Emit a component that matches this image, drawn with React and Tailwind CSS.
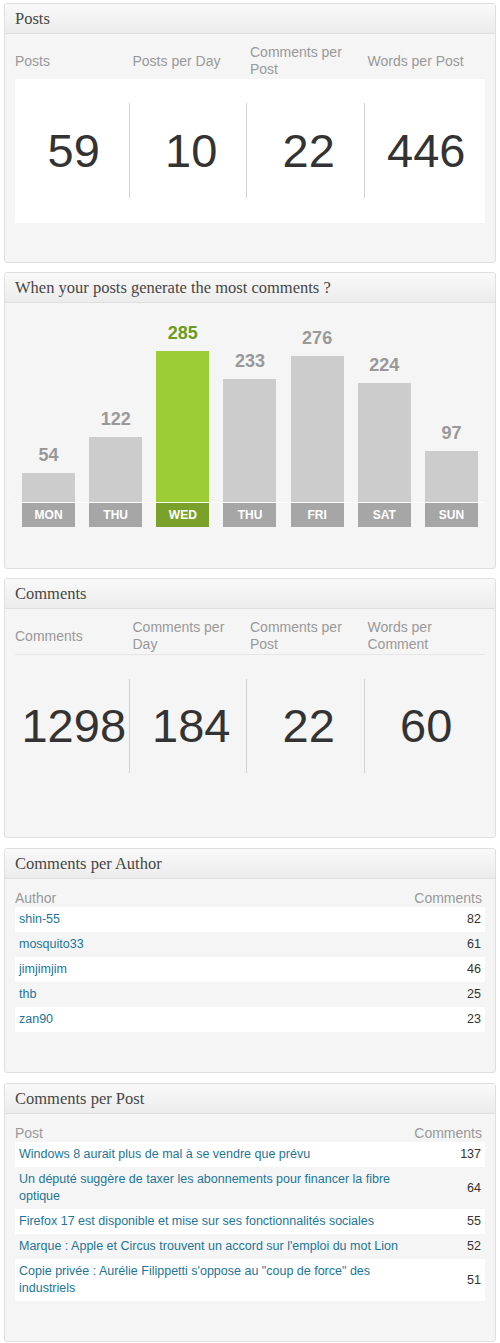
import React from "react";

const sans = { fontFamily: '"Liberation Sans", Arial, sans-serif' };

function Panel({ title, children, className = "" }) {
  return (
    <div className={"rounded-[3px] border border-[#dfdfdf] bg-[#f5f5f5] overflow-hidden " + className}>
      <div className="h-[30px] border-b border-[#dfdfdf] bg-gradient-to-b from-[#f9f9f9] to-[#ececec] px-[10px] flex items-center">
        <span
          className="text-[16.5px] text-[#464646] leading-none pt-[1px]"
          style={{ fontFamily: '"Liberation Serif", Georgia, serif' }}
        >
          {title}
        </span>
      </div>
      <div className="px-[10px]">{children}</div>
    </div>
  );
}

function Stats({ labels, values, white }) {
  return (
    <div className="pt-[9px] pb-[39px]">
      <div className="grid grid-cols-4 h-[36px]">
        {labels.map((l, i) => (
          <div key={i} className="flex items-center pr-[6px] text-[14px] leading-[17px] text-[#999]">
            {l}
          </div>
        ))}
      </div>
      <div
        className={
          "grid grid-cols-4 h-[144px] " +
          (white ? "bg-white" : "border-t border-[#e6e6e6]")
        }
      >
        {values.map((v, i) => (
          <div key={i} className="relative flex items-center justify-center text-[47px] text-[#333] leading-none">
            {i > 0 && (
              <div className="absolute left-[-4px] top-[24px] bottom-[25px] w-px bg-[#d2d2d2]" />
            )}
            <span className="-mt-[2px]">{v}</span>
          </div>
        ))}
      </div>
    </div>
  );
}

const days = [
  { d: "MON", v: 54 },
  { d: "THU", v: 122 },
  { d: "WED", v: 285, hi: true },
  { d: "THU", v: 233 },
  { d: "FRI", v: 276 },
  { d: "SAT", v: 224 },
  { d: "SUN", v: 97 },
];

function Chart() {
  return (
    <div className="pb-[41px]">
      <div className="h-[199px] grid grid-cols-7 items-end">
        {days.map((x, i) => (
          <div key={i} className="flex flex-col items-center">
            <div
              className={
                "text-[18px] font-bold leading-[22px] mb-[7px] " +
                (x.hi ? "text-[#6b9c1e]" : "text-[#999]")
              }
            >
              {x.v}
            </div>
            <div
              className={"w-[53px] " + (x.hi ? "bg-[#9dcd35]" : "bg-[#cccccc]")}
              style={{ height: Math.round(x.v * 0.53) + "px" }}
            />
          </div>
        ))}
      </div>
      <div className="h-px bg-white" />
      <div className="grid grid-cols-7">
        {days.map((x, i) => (
          <div key={i} className="flex justify-center">
            <div
              className={
                "w-[53px] h-[24px] flex items-center justify-center text-white text-[12px] font-bold " +
                (x.hi ? "bg-[#7aa22a]" : "bg-[#a6a6a6]")
              }
            >
              {x.d}
            </div>
          </div>
        ))}
      </div>
    </div>
  );
}

function Table({ head, rows, titleWidth }) {
  return (
    <div className="pb-[40px]">
      <div className="h-[28px] pt-[10px] flex justify-between text-[14px] leading-[18px] text-[#999] pr-[3px]">
        <span>{head}</span>
        <span>Comments</span>
      </div>
      {rows.map((r, i) => (
        <div
          key={i}
          className={
            "flex items-center justify-between px-[4px] py-[4px] text-[12.5px] leading-[17px] " +
            (i % 2 === 0 ? "bg-white" : "")
          }
        >
          <span className="text-[#21759b]" style={titleWidth ? { width: titleWidth } : undefined}>
            {r[0]}
          </span>
          <span className="text-[#333]">{r[1]}</span>
        </div>
      ))}
    </div>
  );
}

export default function App() {
  return (
    <div className="bg-white px-[4px] pt-[3px] pb-[1px]" style={sans}>
      <Panel title="Posts">
        <Stats
          white
          labels={["Posts", "Posts per Day", "Comments per Post", "Words per Post"]}
          values={["59", "10", "22", "446"]}
        />
      </Panel>
      <Panel title="When your posts generate the most comments ?" className="mt-[9px]">
        <Chart />
      </Panel>
      <Panel title="Comments" className="mt-[9px]">
        <Stats
          labels={["Comments", "Comments per Day", "Comments per Post", "Words per Comment"]}
          values={["1298", "184", "22", "60"]}
        />
      </Panel>
      <Panel title="Comments per Author" className="mt-[10px]">
        <Table
          head="Author"
          rows={[
            ["shin-55", "82"],
            ["mosquito33", "61"],
            ["jimjimjim", "46"],
            ["thb", "25"],
            ["zan90", "23"],
          ]}
        />
      </Panel>
      <Panel title="Comments per Post" className="mt-[10px]">
        <Table
          head="Post"
          titleWidth="382px"
          rows={[
            ["Windows 8 aurait plus de mal à se vendre que prévu", "137"],
            ["Un député suggère de taxer les abonnements pour financer la fibre optique", "64"],
            ["Firefox 17 est disponible et mise sur ses fonctionnalités sociales", "55"],
            ["Marque : Apple et Circus trouvent un accord sur l'emploi du mot Lion", "52"],
            ['Copie privée : Aurélie Filippetti s\'oppose au "coup de force" des industriels', "51"],
          ]}
        />
      </Panel>
    </div>
  );
}
